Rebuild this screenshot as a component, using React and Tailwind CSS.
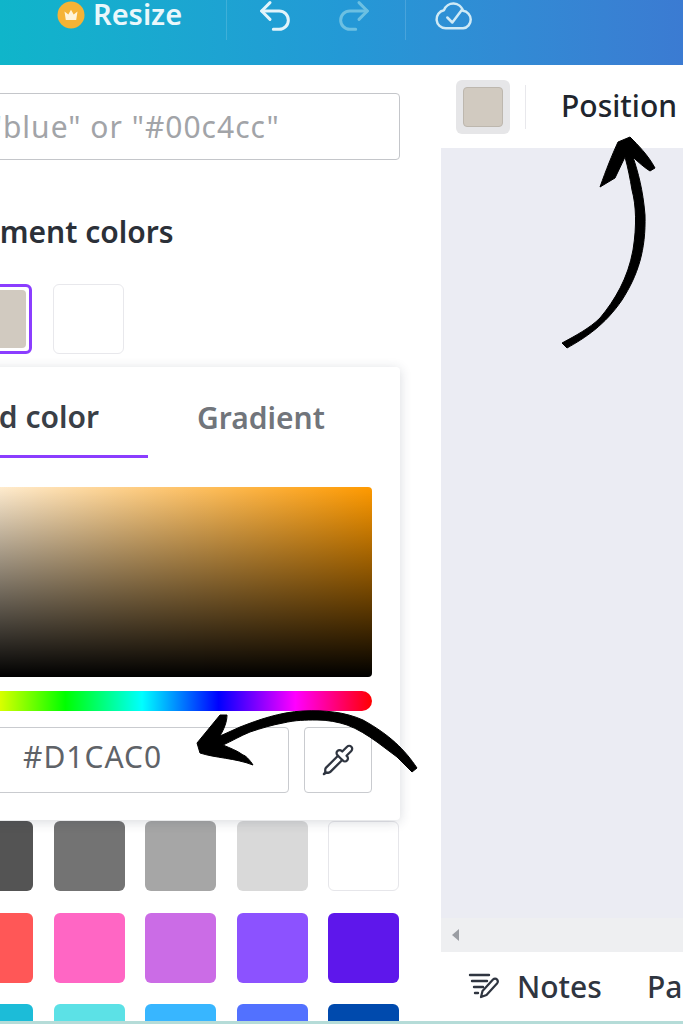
import React from "react";
import { Undo2, Redo2, Pipette } from "lucide-react";

const swatchRows = [
  ["bg-[#545454]", "bg-[#737373]", "bg-[#a6a6a6]", "bg-[#d9d9d9]", "bg-white border border-[#e6e6ea]"],
  ["bg-[#ff5757]", "bg-[#ff66c4]", "bg-[#cb6ce6]", "bg-[#8c52ff]", "bg-[#5e17eb]"],
  ["bg-[#1cbcd8]", "bg-[#5ce1e6]", "bg-[#38b6ff]", "bg-[#5271ff]", "bg-[#004aad]"],
];

const Crown = () => (
  <svg width="28" height="28" viewBox="0 0 28 28" className="shrink-0">
    <circle cx="14" cy="14" r="13.5" fill="#f5b335" />
    <path d="M7.5 10.5l3.8 3 2.700-4.800 2.700 4.800 3.800-3-1.300 8.500H8.800z" fill="#fff4d8" />
  </svg>
);

const CloudCheck = () => (
  <svg width="40" height="34" viewBox="0 0 24 20" fill="none" stroke="#cfeaf6" strokeWidth="1.500" strokeLinecap="round" strokeLinejoin="round">
    <path d="M17.500 18H7a5.500 5.500 0 0 1-1-10.900A6 6 0 0 1 17.400 7.500 5.300 5.300 0 0 1 17.500 18Z" />
    <path d="M8 11.500l3 3 6-8" />
  </svg>
);

const NotesIcon = () => (
  <svg width="32" height="28" viewBox="0 0 32 28" fill="none" stroke="#2f3540" strokeWidth="2.400" strokeLinecap="round" strokeLinejoin="round" className="shrink-0">
    <path d="M2 3h19M4 9h15M6 15h9M7 21h3" />
    <path d="M13 25l1.500-6L25 7.500c1.200-1.200 3-1.200 4 0s1 2.800 0 4L18.500 23z" strokeWidth="2.200" />
  </svg>
);

// hand drawn arrows laid over the screenshot
const Arrows = () => (
  <svg className="absolute inset-0 z-20 pointer-events-none" width="683" height="1024" viewBox="0 0 683 1024" fill="#000" stroke="#000" strokeWidth="1" strokeLinejoin="round">
    <path d="M562 343C575 336 590 328 600 318C615 300 628 278 633 250C637 225 636 205 632 190C630 178 628 168 625 157L615 178L600 187C606 170 612 155 618 142L630 137C638 145 648 155 655 168L650 171C645 168 638 162 633 157C638 172 643 190 645 215C646 250 638 275 622 300C605 325 585 338 567 348Z" />
    <path d="M417 768C405 750 390 735 363 720C345 712 325 710 303 711C280 712 258 720 240 727L220 736C224 729 227 722 227 715L220 715L197 743L200 753C215 758 235 758 253 765C250 760 245 755 243 755C238 751 230 748 223 745C232 741 240 736 250 732C262 728 272 725 283 723C296 720 305 720 317 720C328 720 338 722 347 725C358 729 367 735 377 742L397 757L412 772Z" />
  </svg>
);

export default function App() {
  return (
    <div className="relative w-[683px] h-[1024px] overflow-hidden bg-white font-['Noto_Sans',sans-serif]">
      {/* top bar */}
      <div className="h-[65px] flex items-start bg-gradient-to-r from-[#0fb5ca] via-[#2399d6] to-[#3b7bd2]">
        <div className="ml-[57px] mt-[1px] flex items-center gap-[8px]">
          <Crown />
          <span className="w-[91px] -mt-[2px] text-[29px] leading-[28px] font-semibold text-[#eaf7fb] whitespace-nowrap">Resize</span>
        </div>
        <div className="ml-[42px] w-px h-[40px] bg-white/15" />
        <Undo2 className="ml-[28px] mt-[-4px] text-[#e3f4fa] shrink-0" size={40} strokeWidth={1.8} />
        <Redo2 className="ml-[39px] mt-[-4px] text-[#6cc0e2] shrink-0" size={40} strokeWidth={1.8} />
        <div className="ml-[31px] w-px h-[40px] bg-white/15" />
        <div className="ml-[28px] mt-[-2px]">
          <CloudCheck />
        </div>
      </div>

      <div className="flex h-[959px]">
        {/* color side panel, runs off the left edge */}
        <div className="w-[441px] shrink-0 overflow-hidden">
          <div className="-ml-[116px] w-[516px] pt-[28px]">
            <div className="h-[67px] rounded border border-[#c4c6ca] flex items-center pl-[50px] text-[30px] tracking-[1px] text-[#a2a4a8] whitespace-nowrap">
              Try "blue" or "#00c4cc"
            </div>
            <div className="mt-[52px] pl-[41px] text-[30px] leading-[40px] font-semibold text-[#2b3038] whitespace-nowrap">
              Document colors
            </div>
            <div className="mt-[32px] flex justify-end gap-[21px] pr-[276px]">
              <div className="w-[72px] h-[70px] rounded-md border-[3px] border-[#8b3dff] p-[3px]">
                <div className="w-full h-full rounded-sm bg-[#d1cac0]" />
              </div>
              <div className="w-[71px] h-[70px] rounded-md border border-[#e8e8ec] bg-white" />
            </div>

            {/* picker popover */}
            <div className="relative z-10 mt-[13px] h-[453px] rounded bg-white shadow-[0_2px_12px_rgba(40,50,70,0.18)] px-[28px]">
              <div className="flex h-[91px] text-[30px] font-semibold whitespace-nowrap">
                <div className="w-[236px] h-[91px] border-b-[3px] border-[#8b3dff] flex items-center justify-end pr-[49px] pt-[10px] text-[#3a3f47] shrink-0">
                  Solid color
                </div>
                <div className="ml-[49px] h-[91px] flex items-center pt-[10px] text-[#71757b]">Gradient</div>
              </div>
              <div className="mt-[29px] h-[190px] rounded bg-[linear-gradient(to_bottom,transparent,black),linear-gradient(to_right,white,#ff9a00)]" />
              <div className="mt-[14px] h-[20px] rounded-full bg-[linear-gradient(to_right,#f00,#ff0,#0f0,#0ff,#00f,#f0f,#f00)]" />
              <div className="mt-[16px] flex gap-[15px]">
                <div className="flex-1 h-[66px] rounded border border-[#c9cbcf] flex items-center pl-[110px] pb-[8px] text-[30px] tracking-[1px] text-[#5f6368]">
                  #D1CAC0
                </div>
                <div className="w-[68px] h-[66px] rounded border border-[#c9cbcf] flex items-center justify-center">
                  <Pipette className="text-[#2f3540]" size={34} strokeWidth={1.6} />
                </div>
              </div>
            </div>

            {/* default swatches */}
            <div className="mt-[1px] flex flex-col gap-[21.5px]">
              {swatchRows.map((row, i) => (
                <div key={i} className="flex justify-end gap-[20.5px] pr-[1px]">
                  {row.map((c, j) => (
                    <div key={j} className={`w-[71px] h-[70px] rounded-md ${c}`} />
                  ))}
                </div>
              ))}
            </div>
          </div>
        </div>

        {/* editor side */}
        <div className="flex-1 flex flex-col min-w-0 overflow-hidden">
          <div className="h-[83px] shrink-0 bg-white flex items-center pl-[15px]">
            <div className="w-[54px] h-[54px] rounded-md bg-[#e6e6e8] flex items-center justify-center">
              <div className="w-[40px] h-[40px] rounded-sm bg-[#d1cac0] border border-[#bdb7ae]" />
            </div>
            <div className="ml-[15px] w-px h-[44px] bg-[#e8e8ec]" />
            <span className="ml-[35px] pb-[2px] text-[30px] font-medium text-[#20252d] whitespace-nowrap">Position</span>
          </div>
          <div className="h-[770px] shrink-0 bg-[#ebecf3]" />
          <div className="h-[34px] shrink-0 bg-[#eeeff1] flex items-center pl-[11px]">
            <div className="w-0 h-0 border-y-[6px] border-y-transparent border-r-[7px] border-r-[#9a9da3]" />
          </div>
          <div className="h-[72px] shrink-0 bg-white flex items-center pl-[27px] pb-[4px] text-[30px] font-medium text-[#2f3540] whitespace-nowrap">
            <NotesIcon />
            <span className="ml-[17px]">Notes</span>
            <span className="ml-[45px]">Pages</span>
          </div>
        </div>
      </div>

      <Arrows />
      <div className="absolute left-0 right-0 bottom-0 h-[3px] bg-[#b5dcd8]" />
    </div>
  );
}
